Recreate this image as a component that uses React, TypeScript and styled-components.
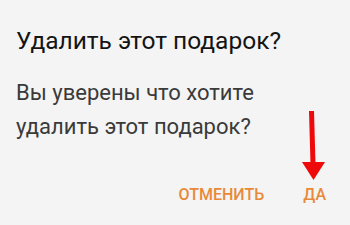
import React from "react";
import styled, { createGlobalStyle } from "styled-components";

const Global = createGlobalStyle`
  html, body { margin: 0; padding: 0; background: #f4f4f4; }
  body { font-family: Roboto, "Noto Sans", sans-serif; }
`;

const Dialog = styled.div`
  width: 350px;
  height: 225px;
  box-sizing: border-box;
  padding: 26px 16px 0 16px;
  background: #f4f4f4;
  display: flex;
  flex-direction: column;
  position: relative;
`;

const Title = styled.div`
  font-size: 24.5px;
  line-height: 30px;
  color: #141414;
  font-weight: 400;
  white-space: nowrap;
`;

const Message = styled.div`
  margin-top: 20px;
  font-size: 22px;
  line-height: 34px;
  color: #3a3a3a;
  white-space: nowrap;
`;

const Actions = styled.div`
  margin-top: 41px;
  display: flex;
  justify-content: flex-end;
  gap: 39px;
  padding-right: 8px;
`;

const ActionButton = styled.button`
  border: none;
  background: none;
  padding: 0;
  font-family: Roboto, sans-serif;
  font-weight: 500;
  font-size: 16px;
  line-height: 20px;
  color: #e8893a;
  letter-spacing: 0;
`;

const Arrow = styled.svg`
  position: absolute;
  left: 300px;
  top: 108px;
`;

export default function App() {
  return (
    <>
      <Global />
      <Dialog>
        <Title>Удалить этот подарок?</Title>
        <Message>
          Вы уверены что хотите
          <br />
          удалить этот подарок?
        </Message>
        <Actions>
          <ActionButton>ОТМЕНИТЬ</ActionButton>
          <ActionButton>ДА</ActionButton>
        </Actions>
        <Arrow width="28" height="76" viewBox="0 0 28 76">
          <line x1="11.5" y1="3" x2="13" y2="56" stroke="#ee0a0a" strokeWidth="5" />
          <polygon points="2,54 25,54 13.5,72" fill="#ee0a0a" />
        </Arrow>
      </Dialog>
    </>
  );
}
